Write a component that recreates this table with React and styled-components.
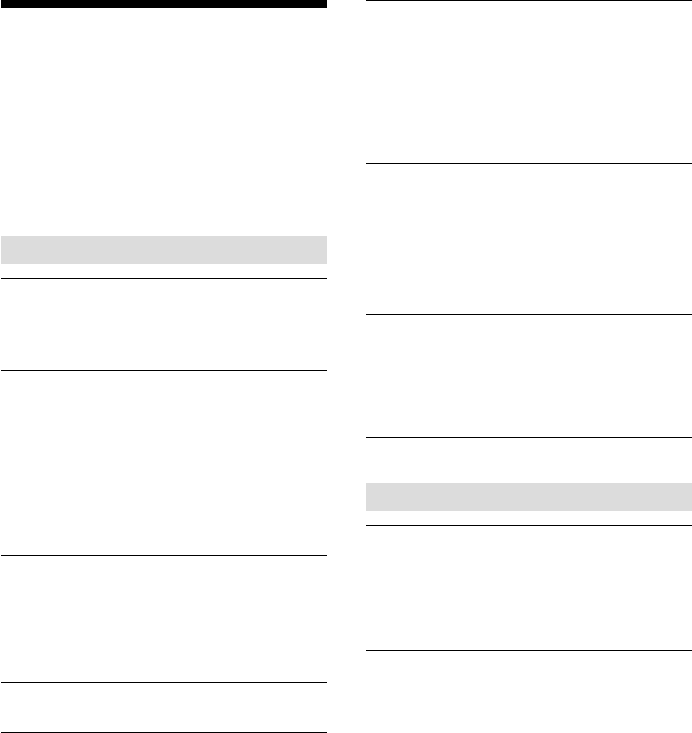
import React from "react";
import styled, { createGlobalStyle } from "styled-components";

const Global = createGlobalStyle`
  html, body { margin: 0; padding: 0; background: #fff; }
  body { font-family: "Liberation Serif", serif; color: #000; }
  * { box-sizing: border-box; }
`;

const Page = styled.div`
  display: grid;
  grid-template-columns: 326px 326px;
  column-gap: 39px;
  padding-left: 1px;
  width: 692px;
  height: 733px;
  overflow: hidden;
`;

const Column = styled.div`
  display: flex;
  flex-direction: column;
`;

const TitleBar = styled.div`
  height: 8px;
  background: #000;
`;

const SectionHeading = styled.div`
  height: 28px;
  background: #dcdcdc;
  margin-top: ${(p) => p.$top}px;
  margin-bottom: 14px;
`;

const Row = styled.div`
  height: ${(p) => p.$h}px;
  border-top: 1px solid #000;
  flex-shrink: 0;
`;

const Rule = styled.div`
  height: 1px;
  background: #000;
  flex-shrink: 0;
`;

export default function App() {
  return (
    <>
      <Global />
      <Page>
        <Column>
          <TitleBar />
          <SectionHeading $top={228} />
          <Row $h={92} />
          <Row $h={185} />
          <Row $h={127} />
          <Row $h={50} />
          <Rule />
        </Column>
        <Column>
          <Row $h={163} />
          <Row $h={151} />
          <Row $h={123} />
          <Row $h={1} />
          <SectionHeading $top={45} />
          <Row $h={125} />
          <Row $h={83} />
        </Column>
      </Page>
    </>
  );
}
